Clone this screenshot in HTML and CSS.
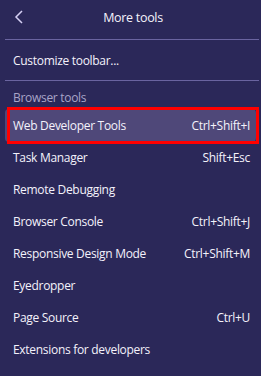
FILE: index.html
```html
<!DOCTYPE html>
<html lang="en">
  <head>
    <meta charset="UTF-8">
    <title>More tools</title>
    <link rel="stylesheet" href="styles.css">
  </head>
  <body>

    <div class="panel">
      <div class="header">
        <svg class="back" width="10" height="14" viewBox="0 0 10 14">
          <polyline points="8,1 2,7 8,13" fill="none" stroke="#d6d0f5" stroke-width="1.5"/>
        </svg>
        <span class="title">More tools</span>
      </div>

      <div class="sep"></div>
      <div class="item">Customize toolbar...</div>
      <div class="sep"></div>

      <div class="label">Browser tools</div>
      <div class="item active">
        <span>Web Developer Tools</span><span>Ctrl+Shift+I</span>
        <div class="marker"></div>
      </div>
      <div class="item"><span>Task Manager</span><span>Shift+Esc</span></div>
      <div class="item"><span>Remote Debugging</span></div>
      <div class="item"><span>Browser Console</span><span>Ctrl+Shift+J</span></div>
      <div class="item"><span>Responsive Design Mode</span><span>Ctrl+Shift+M</span></div>
      <div class="item"><span>Eyedropper</span></div>
      <div class="item"><span>Page Source</span><span>Ctrl+U</span></div>
      <div class="item"><span>Extensions for developers</span></div>
    </div>

  </body>
</html>
```

FILE: styles.css
```css
* {
  box-sizing: border-box;
  margin: 0;
  padding: 0;
}

body {
  background-color: #2b2859;
  color: #f4f2fb;
  font-family: "Open Sans", Arial, sans-serif;
  font-size: 12px;
  letter-spacing: -0.3px;
  overflow: hidden;
}

.panel {
  width: 261px;
  height: 376px;
  padding: 0 2px 0 5px;
}

.header {
  position: relative;
  height: 35px;
  display: flex;
  align-items: center;
  justify-content: center;
}

.back {
  position: absolute;
  left: 9px;
  top: 10px;
}

.title {
  font-size: 12.5px;
  margin-left: 2px;
}

.sep {
  height: 1px;
  background-color: #6a64a0;
  margin: 4px 0;
}

.item {
  position: relative;
  height: 32px;
  width: 251px;
  padding: 0 6px 0 8px;
  display: flex;
  align-items: center;
  justify-content: space-between;
  border-radius: 4px;
}

.label {
  height: 24px;
  padding-left: 8px;
  display: flex;
  align-items: center;
  color: #a9a5c8;
}

.active {
  background-color: #4f4879;
  height: 33px;
  margin-bottom: -1px;
}

.marker {
  position: absolute;
  left: 2px;
  top: -2px;
  width: 252px;
  height: 37px;
  border: 3px solid #ff0000;
}
```
